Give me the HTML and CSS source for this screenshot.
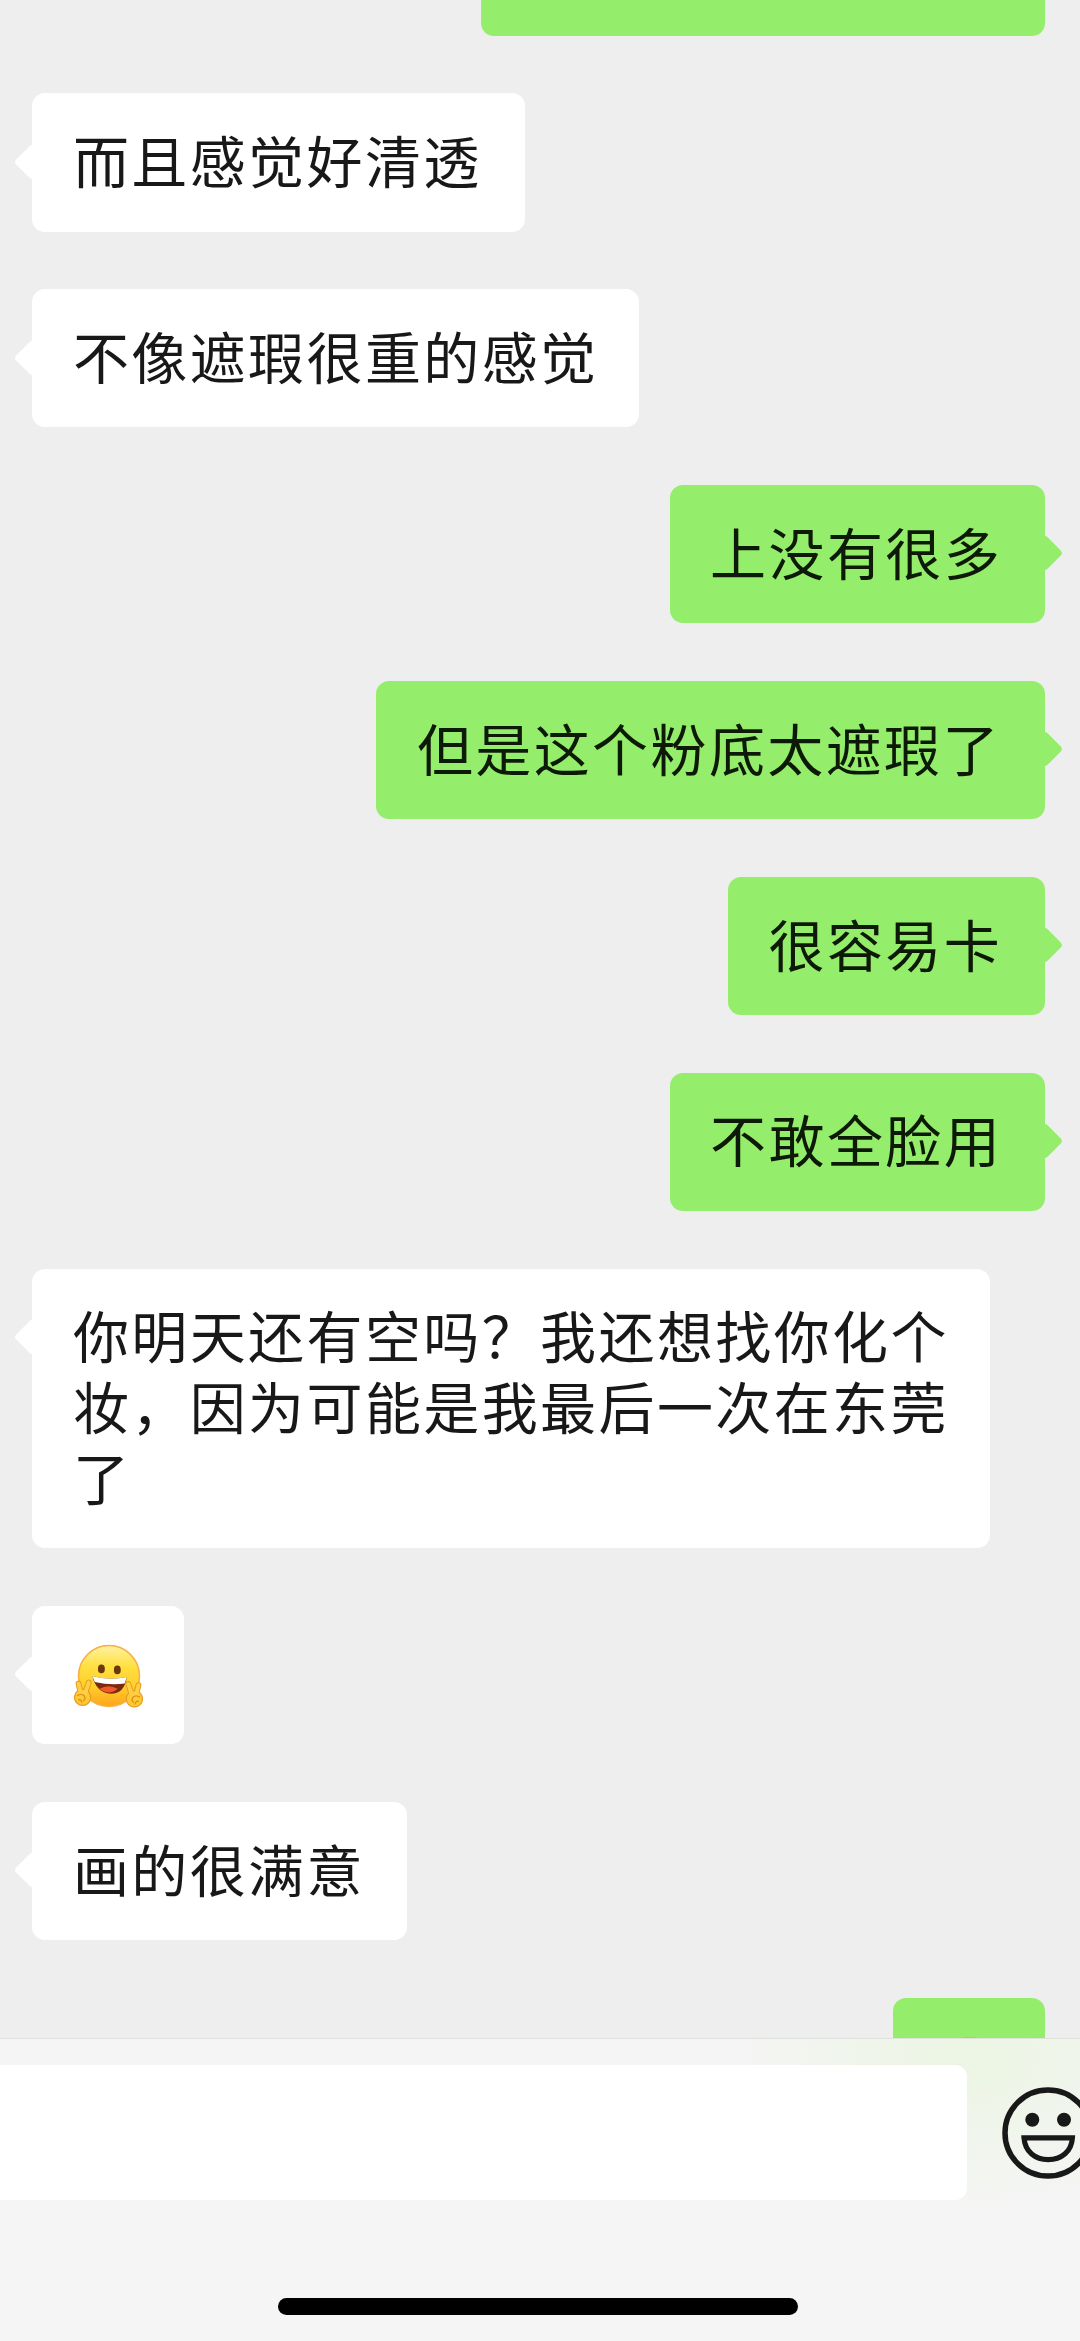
FILE: index.html
```html
<!DOCTYPE html>
<html lang="zh-CN">
<head>
<meta charset="utf-8">
<title>聊天</title>
<link rel="stylesheet" href="styles.css">
</head>
<body>
<svg width="0" height="0" class="defs" aria-hidden="true">
  <defs>
    <linearGradient id="face" x1="0" y1="0" x2="0" y2="1">
      <stop offset="0" stop-color="#fff2a0"/>
      <stop offset=".35" stop-color="#ffe040"/>
      <stop offset=".65" stop-color="#ffd02c"/>
      <stop offset="1" stop-color="#fda51c"/>
    </linearGradient>
    <symbol id="hug" viewBox="0 0 68 64">
      <circle cx="34.500" cy="31.500" r="30" fill="url(#face)" stroke="#f6b044" stroke-width="1.600"/>
      <ellipse cx="27" cy="24.500" rx="3.400" ry="4.300" fill="#6b380c"/>
      <ellipse cx="42.700" cy="25.500" rx="3.400" ry="4.300" fill="#6b380c"/>
      <path d="M18 31.500q16 5 34 1q-2 16.500-16 16.500Q22 48 18 31.500z" fill="#7a2a10"/>
      <path d="M18 31.500q16 5 34 1l-2 6.500q-14 2-29.500-1.500z" fill="#fff"/>
      <path d="M25 44q9-5 18 0q-8 7.500-18 0z" fill="#f2562b"/>
      <g id="hand">
        <path d="M7 50L4.500 39M10.500 50L14.500 38" fill="none" stroke="#e79d20" stroke-width="5.800" stroke-linecap="round"/>
        <circle cx="8.500" cy="52.500" r="8" fill="#ffc936" stroke="#e79d20" stroke-width="1.200"/>
        <path d="M7 50L4.500 39M10.500 50L14.500 38" fill="none" stroke="#ffd044" stroke-width="3.800" stroke-linecap="round"/>
        <path d="M3 51q4-3 7 0q2 3-1 5M4 55q3-1 4 3" fill="none" stroke="#d98d14" stroke-width="1.200"/>
      </g>
      <use href="#hand" transform="matrix(-1 0 0 1 68 1.500)"/>
    </symbol>
  </defs>
</svg>
<main class="chat">
  <div class="bubble sent cut"></div>
  <div class="bubble received roomy">而且感觉好清透</div>
  <div class="bubble received snug">不像遮瑕很重的感觉</div>
  <div class="bubble sent">上没有很多</div>
  <div class="bubble sent roomy">但是这个粉底太遮瑕了</div>
  <div class="bubble sent">很容易卡</div>
  <div class="bubble sent">不敢全脸用</div>
  <div class="bubble received long">你明天还有空吗？我还想找你化个妆，因为可能是我最后一次在东莞了</div>
  <div class="bubble received sticker"><svg class="emoji"><use href="#hug"/></svg></div>
  <div class="bubble received">画的很满意</div>
  <div class="bubble sent sticker"><svg class="emoji"><use href="#hug"/></svg></div>
</main>
<footer class="composer">
  <div class="row">
    <div class="input"></div>
    <svg class="smile" viewBox="0 0 92 92" fill="none" stroke="#181818">
      <circle cx="46" cy="46" r="43" stroke-width="5.500"/>
      <circle cx="30.300" cy="32.800" r="7" fill="#181818" stroke="none"/>
      <circle cx="62" cy="32.800" r="7" fill="#181818" stroke="none"/>
      <path d="M22 50.800H70.400C69.500 65 59 72.700 46.200 72.700S23 65 22 50.800z" stroke-width="5.200"/>
    </svg>
  </div>
  <div class="home"></div>
</footer>
</body>
</html>
```
FILE: styles.css
```css
* { box-sizing: border-box; }

body {
  margin: 0;
  width: 1080px;
  height: 2341px;
  display: flex;
  flex-direction: column;
  overflow: hidden;
  background: #eee;
  color: #181818;
  font-family: "Noto Sans CJK SC", sans-serif;
}

.defs { position: absolute; }

.chat {
  flex: 0 0 2038px;
  display: flex;
  flex-direction: column;
  gap: 57.5px;
  padding: 0 35.5px 0 32.3px;
  overflow: hidden;
}

.bubble {
  position: relative;
  flex: none;
  padding: 30.85px 42.4px 36.85px 40.6px;
  border-radius: 13px;
  font-size: 56px;
  letter-spacing: 2.4px;
  line-height: 70.7px;
}

.bubble::before {
  content: "";
  position: absolute;
  top: 55.5px;
  width: 26px;
  height: 26px;
  border-radius: 4px;
  background: inherit;
  transform: rotate(45deg);
}

.received { align-self: flex-start; background: #fff; }
.received::before { left: -13px; }

.sent { align-self: flex-end; background: #95ee6b; color: #0e1a08; }
.sent::before { right: -13px; }

.cut {
  width: 563.6px;
  height: 35.7px;
  padding: 0;
  border-radius: 0 0 13px 13px;
}
.cut::before { display: none; }

.snug { padding-right: 40.4px; }
.roomy { padding-right: 43.6px; }

.long { width: 958px; padding-right: 37px; }

.sticker {
  display: flex;
  width: 151.8px;
  height: 138.4px;
  padding: 38.5px 0 0 41.5px;
}

.emoji { width: 69px; height: 65px; }

.composer {
  flex: 1;
  display: flex;
  flex-direction: column;
  align-items: center;
  justify-content: space-between;
  padding: 26px 0 25.7px;
  border-top: 1px solid #dfe1dd;
  background:
    radial-gradient(ellipse 240px 150px at 970px 20px, #ecf5e3, rgba(245, 245, 245, 0)),
    #f5f5f5;
}

.row {
  align-self: flex-start;
  display: flex;
  align-items: center;
  gap: 34.5px;
}

.input {
  width: 967.3px;
  height: 135px;
  border-radius: 0 12px 12px 0;
  background: #fff;
}

.smile { flex: none; width: 92px; height: 92px; }

.home {
  width: 520px;
  height: 17.5px;
  margin-right: 4px;
  border-radius: 9px;
  background: #000;
}
```
